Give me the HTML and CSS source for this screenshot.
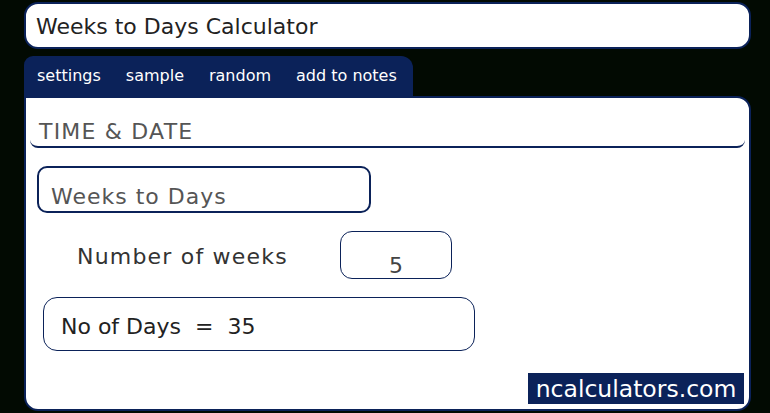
FILE: index.html
```html
<!DOCTYPE html>
<html lang="en">
<head>
    <meta charset="UTF-8">
    <meta name="viewport" content="width=device-width, initial-scale=1.0">
    <title>Weeks to Days Calculator</title>
    <link rel="stylesheet" href="styles.css">
</head>
<body>
    <div class="page">
        <div class="title-bar">Weeks to Days Calculator</div>

        <nav class="tabs">
            <span class="tab">settings</span>
            <span class="tab">sample</span>
            <span class="tab">random</span>
            <span class="tab">add to notes</span>
        </nav>

        <div class="panel">
            <h2 class="category">TIME &amp; DATE</h2>

            <div class="mode-box">Weeks to Days</div>

            <div class="input-row">
                <label for="weeks">Number of weeks</label>
                <div class="input-box" id="weeks">5</div>
            </div>

            <div class="result-box">No of Days &nbsp;= &nbsp;35</div>

            <div class="brand">ncalculators.com</div>
        </div>
    </div>
</body>
</html>
```

FILE: styles.css
```css
body {
    margin: 0;
    padding: 0;
    background-color: #020a02;
    font-family: 'DejaVu Sans', sans-serif;
    color: #333;
}

.page {
    width: 727px;
    padding: 2px 0 0 24px;
}

.title-bar {
    height: 43px;
    line-height: 46px;
    padding-left: 10px;
    background: white;
    border: 2px solid #0b2259;
    border-radius: 14px;
    font-size: 22px;
    color: #222;
}

/* tabs */
.tabs {
    display: flex;
    width: 389px;
    height: 40px;
    margin-top: 7px;
    background-color: #0b2259;
    border-radius: 9px 12px 0 0;
}

.tab {
    flex-shrink: 0;
    padding: 0 12px 0 13px;
    line-height: 40px;
    font-size: 16px;
    white-space: nowrap;
    color: white;
}

/* main panel */
.panel {
    display: flex;
    flex-direction: column;
    height: 311px;
    background: white;
    border: 2px solid #0b2259;
    border-radius: 0 14px 14px 14px;
}

.category {
    margin: 0 4px;
    padding: 21px 0 0 9px;
    height: 27px;
    font-size: 22px;
    letter-spacing: 1.2px;
    font-weight: normal;
    color: #555;
    border-bottom: 2px solid #0b2259;
    border-radius: 0 0 8px 8px;
}

.mode-box {
    width: 318px;
    height: 43px;
    margin: 18px 0 0 11px;
    padding-left: 12px;
    line-height: 58px;
    border: 2px solid #0b2259;
    border-radius: 10px;
    font-size: 22px;
    letter-spacing: 1px;
    color: #555;
}

.input-row {
    display: flex;
    align-items: center;
    margin: 18px 0 0 51px;
}

.input-row label {
    width: 263px;
    padding-top: 2px;
    font-size: 22px;
    letter-spacing: 1.2px;
    color: #333;
}

.input-box {
    width: 110px;
    height: 46px;
    line-height: 68px;
    text-align: center;
    border: 1.5px solid #0b2259;
    border-radius: 12px;
    font-size: 22px;
    color: #444;
}

.result-box {
    width: 413px;
    height: 52px;
    margin: 18px 0 0 17px;
    padding-left: 17px;
    line-height: 57px;
    border: 1.5px solid #0b2259;
    border-radius: 14px;
    font-size: 22px;
    color: #222;
}

.brand {
    align-self: flex-end;
    margin: auto 5px 5px 0;
    width: 216px;
    height: 31px;
    line-height: 32px;
    background-color: #0b2259;
    color: white;
    font-size: 23.5px;
    text-align: center;
}
```
